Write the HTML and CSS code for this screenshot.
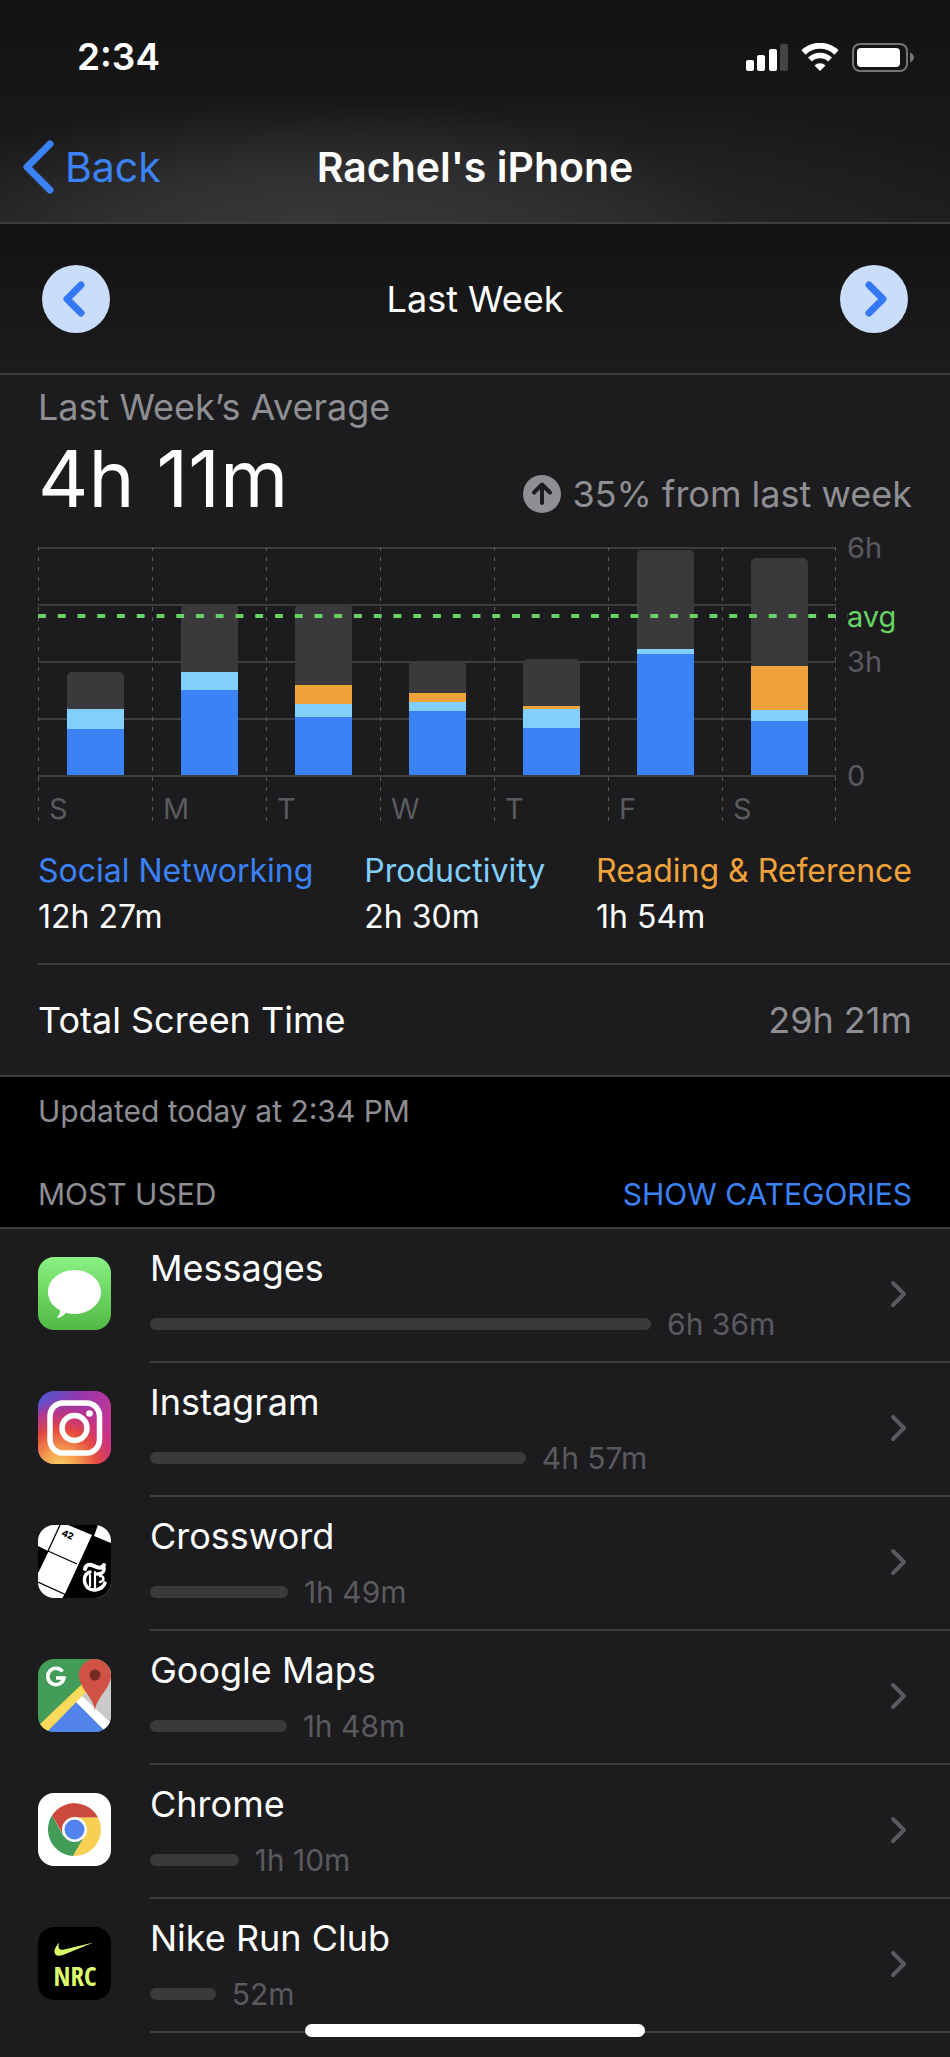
FILE: index.html
```
<!DOCTYPE html>
<html lang="en">
<head>
    <meta charset="UTF-8">
    <meta name="viewport" content="width=device-width, initial-scale=1.0">
    <title>Rachel's iPhone</title>
    <link rel="stylesheet" href="styles.css">
</head>
<body>
    <header class="top">
        <div class="status">
            <span class="clock">2:34</span>
            <div class="status-icons">
                <svg width="42" height="28" viewBox="0 0 42 28">
                    <rect x="0" y="17" width="8" height="11" rx="2" fill="#fff"/>
                    <rect x="11" y="12" width="8" height="16" rx="2" fill="#fff"/>
                    <rect x="23" y="6" width="8" height="22" rx="2" fill="#fff"/>
                    <rect x="34" y="1" width="8" height="27" rx="2" fill="#444446"/>
                </svg>
                <svg width="38" height="28" viewBox="0 0 38 28">
                    <path d="M2.500 9.500A23.500 23.500 0 0 1 35.500 9.500" fill="none" stroke="#fff" stroke-width="6"/>
                    <path d="M9 16.500A14.200 14.200 0 0 1 29 16.500" fill="none" stroke="#fff" stroke-width="5.500"/>
                    <path d="M19 28l-5.500-5.500a7.800 7.800 0 0 1 11 0z" fill="#fff"/>
                </svg>
                <svg width="62" height="29" viewBox="0 0 62 29">
                    <rect x="1" y="1" width="54" height="27" rx="7" fill="none" stroke="#757577" stroke-width="2"/>
                    <rect x="5" y="5" width="43" height="19" rx="4" fill="#fff"/>
                    <path d="M58 9.500q4 2 4 5t-4 5z" fill="#757577"/>
                </svg>
            </div>
        </div>
        <nav class="nav">
            <a class="back" href="#">
                <svg width="32" height="54" viewBox="0 0 32 54">
                    <path d="M28 4L5 27l23 23" fill="none" stroke="#3b82f7" stroke-width="7" stroke-linecap="round" stroke-linejoin="round"/>
                </svg>
                Back
            </a>
            <h1>Rachel's iPhone</h1>
        </nav>
    </header>

    <div class="week">
        <button class="round" aria-label="Previous week">
            <svg width="68" height="68" viewBox="0 0 68 68">
                <path d="M39 20L25 34l14 14" fill="none" stroke="#3478f6" stroke-width="7" stroke-linecap="round" stroke-linejoin="round"/>
            </svg>
        </button>
        <h2>Last Week</h2>
        <button class="round" aria-label="Next week">
            <svg width="68" height="68" viewBox="0 0 68 68">
                <path d="M29 20l14 14-14 14" fill="none" stroke="#3478f6" stroke-width="7" stroke-linecap="round" stroke-linejoin="round"/>
            </svg>
        </button>
    </div>

    <main>
        <section class="summary">
            <p class="label">Last Week’s Average</p>
            <div class="average">
                <strong>4h 11m</strong>
                <span class="change">
                    <svg width="38" height="38" viewBox="0 0 38 38">
                        <circle cx="19" cy="19" r="19" fill="#8e8e93"/>
                        <path d="M19 28V10M11 17.500L19 9.500l8 8" fill="none" stroke="#1c1c1e" stroke-width="4" stroke-linecap="round" stroke-linejoin="round"/>
                    </svg>
                    35% from last week
                </span>
            </div>

            <div class="chart">
                <div class="plot">
                    <div class="day">
                        <div class="bar">
                            <i class="social" style="--min: 73"></i>
                            <i class="productivity" style="--min: 32"></i>
                            <i class="other" style="--min: 58"></i>
                        </div>
                        <span>S</span>
                    </div>
                    <div class="day">
                        <div class="bar">
                            <i class="social" style="--min: 135"></i>
                            <i class="productivity" style="--min: 28"></i>
                            <i class="other" style="--min: 107"></i>
                        </div>
                        <span>M</span>
                    </div>
                    <div class="day">
                        <div class="bar">
                            <i class="social" style="--min: 92"></i>
                            <i class="productivity" style="--min: 20"></i>
                            <i class="reading" style="--min: 30"></i>
                            <i class="other" style="--min: 128"></i>
                        </div>
                        <span>T</span>
                    </div>
                    <div class="day">
                        <div class="bar">
                            <i class="social" style="--min: 101"></i>
                            <i class="productivity" style="--min: 14"></i>
                            <i class="reading" style="--min: 14"></i>
                            <i class="other" style="--min: 51"></i>
                        </div>
                        <span>W</span>
                    </div>
                    <div class="day">
                        <div class="bar">
                            <i class="social" style="--min: 75"></i>
                            <i class="productivity" style="--min: 29"></i>
                            <i class="reading" style="--min: 5"></i>
                            <i class="other" style="--min: 74"></i>
                        </div>
                        <span>T</span>
                    </div>
                    <div class="day">
                        <div class="bar">
                            <i class="social" style="--min: 191"></i>
                            <i class="productivity" style="--min: 8"></i>
                            <i class="other" style="--min: 157"></i>
                        </div>
                        <span>F</span>
                    </div>
                    <div class="day">
                        <div class="bar">
                            <i class="social" style="--min: 85"></i>
                            <i class="productivity" style="--min: 18"></i>
                            <i class="reading" style="--min: 69"></i>
                            <i class="other" style="--min: 171"></i>
                        </div>
                        <span>S</span>
                    </div>
                    <div class="avg-line"></div>
                </div>
                <div class="axis">
                    <span>6h</span>
                    <span class="avg">avg</span>
                    <span>3h</span>
                    <span>0</span>
                </div>
            </div>

            <dl class="legend">
                <div>
                    <dt class="c-social">Social Networking</dt>
                    <dd>12h 27m</dd>
                </div>
                <div>
                    <dt class="c-productivity">Productivity</dt>
                    <dd>2h 30m</dd>
                </div>
                <div>
                    <dt class="c-reading">Reading &amp; Reference</dt>
                    <dd>1h 54m</dd>
                </div>
            </dl>

            <div class="total">
                <span>Total Screen Time</span>
                <span class="total-value">29h 21m</span>
            </div>
        </section>

        <p class="updated">Updated today at 2:34 PM</p>

        <div class="list-head">
            <h3>MOST USED</h3>
            <button class="show">SHOW CATEGORIES</button>
        </div>

        <ul class="apps">
            <li>
                <a class="app" href="#">
                    <svg class="icon" viewBox="0 0 73 73">
                        <defs>
                            <linearGradient id="green" x1="0" y1="0" x2="0" y2="1">
                                <stop offset="0" stop-color="#8af283"/>
                                <stop offset="1" stop-color="#50b943"/>
                            </linearGradient>
                        </defs>
                        <rect width="73" height="73" fill="url(#green)"/>
                        <path d="M36.500 13C51 13 63 22.800 63 35S51 57 36.500 57c-3 0-6-.4-8.700-1.200C25.500 59 22 61 18.500 61c2-2 3.500-4.300 3.700-7.500C14.800 49.500 10 42.700 10 35c0-12.200 12-22 26.500-22z" fill="#fff"/>
                    </svg>
                    <div class="info">
                        <span class="name">Messages</span>
                        <span class="usage"><i style="--min: 396"></i>6h 36m</span>
                    </div>
                    <svg class="go" viewBox="0 0 18 28"><path d="M3 3l11 11L3 25"/></svg>
                </a>
            </li>
            <li>
                <a class="app" href="#">
                    <svg class="icon" viewBox="0 0 73 73">
                        <defs>
                            <linearGradient id="insta" x1="0" y1="0" x2="1" y2=".5">
                                <stop offset="0" stop-color="#4a5bd6"/>
                                <stop offset=".45" stop-color="#8f38ad"/>
                                <stop offset="1" stop-color="#c93592"/>
                            </linearGradient>
                            <radialGradient id="glow" cx=".3" cy="1.05" r=".95">
                                <stop offset="0" stop-color="#fbd46b"/>
                                <stop offset=".25" stop-color="#f5a04e"/>
                                <stop offset=".55" stop-color="#e5493f"/>
                                <stop offset=".8" stop-color="#cf3178" stop-opacity=".7"/>
                                <stop offset="1" stop-color="#b0339a" stop-opacity="0"/>
                            </radialGradient>
                        </defs>
                        <rect width="73" height="73" fill="url(#insta)"/>
                        <rect width="73" height="73" fill="url(#glow)"/>
                        <g fill="none" stroke="#fff" stroke-width="5.500">
                            <rect x="12" y="12" width="49.500" height="50" rx="13"/>
                            <circle cx="36.500" cy="37" r="12.500"/>
                        </g>
                        <circle cx="51.500" cy="22.500" r="3.300" fill="#fff"/>
                    </svg>
                    <div class="info">
                        <span class="name">Instagram</span>
                        <span class="usage"><i style="--min: 297"></i>4h 57m</span>
                    </div>
                    <svg class="go" viewBox="0 0 18 28"><path d="M3 3l11 11L3 25"/></svg>
                </a>
            </li>
            <li>
                <a class="app" href="#">
                    <svg class="icon" viewBox="0 0 73 73">
                        <rect width="73" height="73" fill="#fff"/>
                        <path d="M30 0L54 10 25 73h48V18L56 11l4-11zM0 21l10 5L0 46z" fill="#000"/>
                        <path d="M22 0L10 26 0 47M10 26l29 13M0 57l35 16M27 70l-2 3" fill="none" stroke="#000" stroke-width="1.300"/>
                        <text x="23" y="10" class="num" transform="rotate(25 23 10)">42</text>
                        <g fill="none" stroke="#fff" stroke-linecap="round">
                            <path d="M47 44c1-5 5-5 9-3s8 3 10-1" stroke-width="4"/>
                            <path d="M65 41c3 5-1 8-6 8M52 47c-7 2-7 11-2 16 5 4 14 2 17-5" stroke-width="3.500"/>
                            <path d="M57 47v17M52 50v11" stroke-width="2.200"/>
                            <path d="M62 51c4 0 5 5 0 6" stroke-width="2.500"/>
                        </g>
                    </svg>
                    <div class="info">
                        <span class="name">Crossword</span>
                        <span class="usage"><i style="--min: 109"></i>1h 49m</span>
                    </div>
                    <svg class="go" viewBox="0 0 18 28"><path d="M3 3l11 11L3 25"/></svg>
                </a>
            </li>
            <li>
                <a class="app" href="#">
                    <svg class="icon" viewBox="0 0 73 73">
                        <rect width="73" height="73" fill="#439c58"/>
                        <path d="M37 42L73 6v67z" fill="#c9c9cb"/>
                        <path d="M37 42l31 31H6z" fill="#5384ee"/>
                        <path d="M37 42l6-6 30 28v9h-5z" fill="#fff"/>
                        <path d="M0 67l44-42 4 8L9 73H0z" fill="#fbd95a"/>
                        <path d="M57 52c-1-14-16-22-16-36C41 7 48 0 57 0s16 7 16 16c0 14-15 22-16 36z" fill="#cf5244"/>
                        <circle cx="57" cy="16" r="5.500" fill="#762a24"/>
                        <path d="M24.500 12.500A8.200 8.200 0 1 0 26 19H18" fill="none" stroke="#fff" stroke-width="3.600"/>
                    </svg>
                    <div class="info">
                        <span class="name">Google Maps</span>
                        <span class="usage"><i style="--min: 108"></i>1h 48m</span>
                    </div>
                    <svg class="go" viewBox="0 0 18 28"><path d="M3 3l11 11L3 25"/></svg>
                </a>
            </li>
            <li>
                <a class="app" href="#">
                    <svg class="icon" viewBox="0 0 73 73">
                        <rect width="73" height="73" fill="#fff"/>
                        <path d="M14 22.500A26.500 26.500 0 0 0 35 63l12-20-21.500 0z" fill="#429c57"/>
                        <path d="M36.500 24.500H60A26.500 26.500 0 0 1 35 63l11.500-20z" fill="#f8cf53"/>
                        <path d="M14 22.500L26 43l10.500-18.500H60A26.500 26.500 0 0 0 14 22.500z" fill="#cb4a3d"/>
                        <circle cx="36.500" cy="36.500" r="12.500" fill="#fff"/>
                        <circle cx="36.500" cy="36.500" r="10" fill="#5283ee"/>
                    </svg>
                    <div class="info">
                        <span class="name">Chrome</span>
                        <span class="usage"><i style="--min: 70"></i>1h 10m</span>
                    </div>
                    <svg class="go" viewBox="0 0 18 28"><path d="M3 3l11 11L3 25"/></svg>
                </a>
            </li>
            <li>
                <a class="app" href="#">
                    <svg class="icon" viewBox="0 0 73 73">
                        <rect width="73" height="73" fill="#000"/>
                        <path d="M55.500 15.500L25 28c-6 2.300-10-.5-8-6 .8-2.300 2.300-4.500 4.300-6.500-2 5.500 0 8.300 5 7z" fill="#dcfb6b"/>
                        <text x="37" y="59" class="nrc" text-anchor="middle">NRC</text>
                    </svg>
                    <div class="info">
                        <span class="name">Nike Run Club</span>
                        <span class="usage"><i style="--min: 52"></i>52m</span>
                    </div>
                    <svg class="go" viewBox="0 0 18 28"><path d="M3 3l11 11L3 25"/></svg>
                </a>
            </li>
        </ul>
    </main>

    <div class="home"></div>
</body>
</html>
```
FILE: styles.css
```
* {
    box-sizing: border-box;
}
body {
    font-family: Inter, "Liberation Sans", sans-serif;
    margin: 0;
    background: #1c1c1e;
    color: #ffffff;
    font-size: 36px;
    line-height: 44px;
}
h1, h2, h3, p, dl, dd, ul {
    margin: 0;
    padding: 0;
    font-weight: 400;
    list-style: none;
}
a {
    color: inherit;
    text-decoration: none;
}
button {
    font: inherit;
    border: none;
    padding: 0;
    background: none;
    cursor: pointer;
}
svg {
    display: block;
    flex-shrink: 0;
}
.top {
    border-bottom: 2px solid #3d3d40;
    background:
        radial-gradient(ellipse 46% 62% at 32% 106%, #38383a 0%, rgba(56, 56, 58, 0.7) 45%, rgba(56, 56, 58, 0) 100%),
        radial-gradient(ellipse 50% 70% at 60% 110%, #29292b 0%, rgba(41, 41, 43, 0) 100%),
        linear-gradient(#121212, #1c1c1d);
}
.status {
    display: flex;
    justify-content: space-between;
    align-items: center;
    height: 114px;
    padding: 0 36px 0 77px;
}
.clock {
    font-size: 37px;
    font-weight: 600;
}
.status-icons {
    display: flex;
    align-items: center;
    gap: 13px;
}
.nav {
    display: grid;
    grid-template-columns: 1fr auto 1fr;
    align-items: center;
    height: 108px;
    padding: 0 22px 2px;
    font-size: 41px;
}
.nav h1 {
    font-size: 41px;
    font-weight: 600;
}
.back {
    display: flex;
    align-items: center;
    gap: 11px;
    color: #3b82f7;
}
.week {
    display: flex;
    justify-content: space-between;
    align-items: center;
    height: 151px;
    padding: 0 42px;
    border-bottom: 2px solid #3d3d40;
    background: linear-gradient(#121213, #1c1c1e);
}
.week h2 {
    font-size: 36px;
}
.round {
    border-radius: 50%;
    background: #cadefc;
}
.summary {
    padding: 10px 0 0 38px;
    border-bottom: 2px solid #3d3d40;
}
.label {
    color: #8e8e93;
}
.average {
    display: flex;
    justify-content: space-between;
    align-items: flex-end;
    padding-right: 38px;
}
.average strong {
    font-size: 78px;
    font-weight: 400;
    line-height: 100px;
}
.change {
    display: flex;
    align-items: center;
    gap: 11px;
    padding-bottom: 13px;
    color: #8e8e93;
}
.chart {
    display: grid;
    grid-template-columns: 1fr 114px;
    margin-top: 18px;
    color: #5a5a5e;
    font-size: 29px;
    line-height: 34px;
}
.plot {
    position: relative;
    display: grid;
    grid-template-columns: repeat(7, 1fr);
    height: 280px;
    background:
        repeating-linear-gradient(#5a5a5d 0 4px, transparent 4px 10px) right / 1px 100% no-repeat,
        repeating-linear-gradient(#3d3d40 0 2px, transparent 2px 57px) top / 100% 230px no-repeat;
}
.day {
    display: flex;
    flex-direction: column;
    background: repeating-linear-gradient(#5a5a5d 0 4px, transparent 4px 10px) left / 1px 100% no-repeat;
}
.day span {
    padding: 17px 0 0 11px;
}
.bar {
    display: flex;
    flex-direction: column-reverse;
    width: 50%;
    height: 228px;
    margin: 0 auto;
}
.bar i {
    height: calc(var(--min) * 100% / 360);
}
.social {
    background: #3b82f7;
}
.productivity {
    background: #82cffc;
}
.reading {
    background: #f0a33b;
}
.other {
    border-radius: 5px 5px 0 0;
    background: #3a3a3c;
}
/* runs one gap past the plot so that it ends on a full dash */
.avg-line {
    position: absolute;
    left: 0;
    right: -12px;
    top: 67px;
    height: 4px;
    background: linear-gradient(90deg, #69d264 40%, transparent 40%) 0 0 / 20px 100% round;
}
.axis {
    display: grid;
    grid-template-rows: 69px 45px 114px 34px;
    margin-top: -16px;
    padding-left: 11px;
}
.avg {
    color: #69d264;
}
.legend {
    display: flex;
    justify-content: space-between;
    padding: 21px 38px 23px 0;
    border-bottom: 2px solid #3d3d40;
    font-size: 32px;
    line-height: 46px;
}
.c-social {
    color: #3b82f7;
}
.c-productivity {
    color: #82cffc;
}
.c-reading {
    color: #f0a33b;
}
.total {
    display: flex;
    justify-content: space-between;
    align-items: center;
    height: 110px;
    padding-right: 38px;
}
.total-value {
    color: #8e8e93;
}
.updated {
    padding: 16px 38px 0;
    background: #000;
    color: #8e8e93;
    font-size: 30px;
    line-height: 36px;
}
.list-head {
    display: flex;
    justify-content: space-between;
    padding: 47px 38px 15px;
    background: #000;
    border-bottom: 2px solid #3d3d40;
    font-size: 30px;
    line-height: 36px;
}
.list-head h3 {
    font-size: 30px;
    color: #8e8e93;
}
.show {
    color: #3b82f7;
}
.app {
    display: flex;
    align-items: center;
    height: 134px;
    padding-left: 38px;
}
.icon {
    width: 73px;
    height: 73px;
    margin: 0 39px 5px 0;
    border-radius: 16px;
}
.info {
    display: flex;
    flex-direction: column;
    gap: 14px;
    flex: 1;
    height: 134px;
    padding: 17px 80px 0 0;
    border-bottom: 2px solid #3d3d40;
}
.usage {
    display: flex;
    align-items: center;
    gap: 16px;
    color: #5a5a5e;
    font-size: 30px;
    line-height: 40px;
}
.usage i {
    width: calc(var(--min) * 100% / 569);
    height: 12px;
    border-radius: 6px;
    background: #3a3a3c;
}
.go {
    width: 18px;
    height: 28px;
    margin: 0 42px 5px -60px;
    fill: none;
    stroke: #5a5a5e;
    stroke-width: 4px;
    stroke-linecap: round;
    stroke-linejoin: round;
}
.num {
    font-size: 9px;
    font-weight: 800;
}
.nrc {
    font-family: "Open Sans Condensed", Roboto, sans-serif;
    font-size: 27px;
    font-weight: 700;
    fill: #dcfb6b;
}
.home {
    position: fixed;
    left: 50%;
    bottom: 20px;
    width: 340px;
    height: 13px;
    margin-left: -170px;
    border-radius: 7px;
    background: #fff;
}
```
